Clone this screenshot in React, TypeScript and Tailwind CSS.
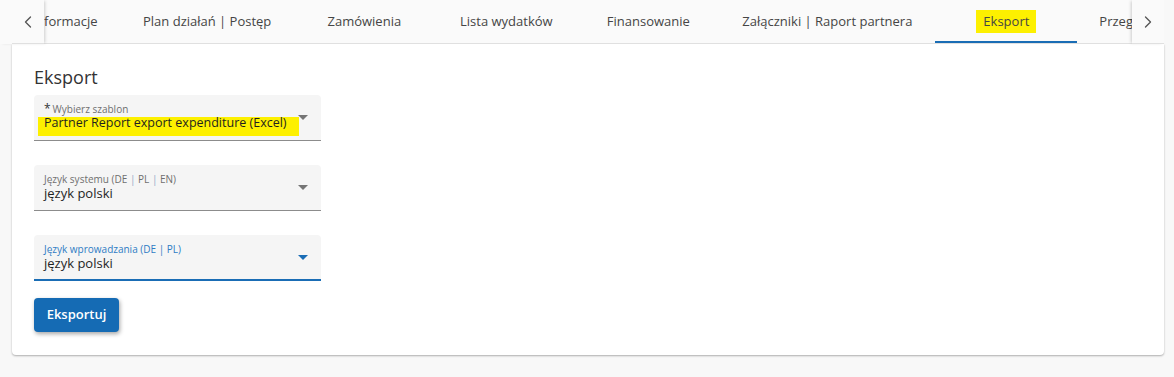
import { ChevronLeft, ChevronRight } from 'lucide-react';

const tabs = [
  'Informacje',
  'Plan działań | Postęp',
  'Zamówienia',
  'Lista wydatków',
  'Finansowanie',
  'Załączniki | Raport partnera',
  'Eksport',
  'Przegląd raportu',
];

const ACTIVE = 'Eksport';

function Caret({ blue }: { blue?: boolean }) {
  return (
    <svg width="10" height="5" viewBox="0 0 10 5" className="shrink-0">
      <path d="M0 0 L10 0 L5 5 Z" fill={blue ? '#1a6db5' : '#757575'} />
    </svg>
  );
}

interface SelectFieldProps {
  label: React.ReactNode;
  value: React.ReactNode;
  focused?: boolean;
  highlight?: boolean;
  valueSize?: string;
}

function SelectField({ label, value, focused, highlight, valueSize = 'text-[13px]' }: SelectFieldProps) {
  return (
    <div
      className={`relative w-[287px] h-[46px] bg-[#f5f5f5] rounded-t-[4px] ${
        focused ? 'border-b-2 border-[#1a6db5]' : 'border-b border-[#8c8c8c]'
      }`}
    >
      {/* marker highlight from the screenshot annotation */}
      {highlight && (
        <div className="absolute left-[4px] top-[22px] w-[261px] h-[19px] bg-[#fdf000]" />
      )}
      <div className="relative pl-[10px] pt-[8px]">
        <div
          className={`text-[10px] leading-[12px] whitespace-nowrap ${
            focused ? 'text-[#2f7cc4]' : 'text-[#6f6f6f]'
          }`}
        >
          {label}
        </div>
        <div className={`${valueSize} leading-[18px] mt-[-1px] text-[#1f1f1f] whitespace-nowrap`}>
          {value}
        </div>
      </div>
      <div className="absolute right-[13px] top-[20px]">
        <Caret blue={focused} />
      </div>
    </div>
  );
}

export default function App() {
  return (
    <div
      className="w-[1174px] h-[377px] bg-[#f8f8f8] overflow-hidden"
      style={{ fontFamily: '"Open Sans", "Noto Sans", sans-serif' }}
    >
      <div className="w-[1164px]">
        {/* tab bar */}
        <div className="flex h-[44px] bg-[#fafafa]">
          <div className="relative z-10 w-[44px] shrink-0 flex flex-col bg-[#fafafa] shadow-[2px_0_3px_-1px_rgba(0,0,0,0.18)]">
            <div className="h-[43px] flex items-center justify-center pl-[11px]">
              <ChevronLeft size={20} strokeWidth={1.6} className="text-[#555]" />
            </div>
            <div className="h-px ml-[12px] bg-[#e0e0e0]" />
          </div>
          <div className="flex-1 overflow-hidden border-b border-[#e0e0e0]">
            <div className="flex ml-[-35px] h-[43px]">
              {tabs.map((tab, i) => {
                const isActive = tab === ACTIVE;
                return (
                  <div
                    key={tab}
                    className={`relative shrink-0 flex items-center justify-center text-[13px] font-medium text-[#454545] whitespace-nowrap ${
                      i === 0 ? 'w-[112px]' : 'min-w-[142px]'
                    } ${i === 5 ? 'px-[23px]' : 'px-[22px]'}`}
                  >
                    {isActive ? (
                      <span className="bg-[#fdf000] px-[7px] py-[2px] leading-[19px]">{tab}</span>
                    ) : (
                      <span>{tab}</span>
                    )}
                    {isActive && (
                      <div className="absolute left-0 right-0 bottom-[-1px] h-[3px] bg-[#1a6db5]" />
                    )}
                  </div>
                );
              })}
            </div>
          </div>
          <div className="relative z-10 w-[32px] shrink-0 flex items-center justify-center bg-[#fafafa] border-b border-[#e0e0e0] shadow-[-2px_0_3px_-1px_rgba(0,0,0,0.18)]">
            <ChevronRight size={20} strokeWidth={1.6} className="text-[#555]" />
          </div>
        </div>

        {/* card */}
        <div className="ml-[12px] h-[311px] bg-white rounded-b-[4px] shadow-[0_1px_2px_rgba(0,0,0,0.3)] px-[22px] pt-[20px]">
          <h2 className="text-[18px] leading-[26px] text-[#333] mb-[5px]">Eksport</h2>
          <div className="flex flex-col gap-[24px]">
            <SelectField
              highlight
              valueSize="text-[12.5px]"
              label={
                <span>
                  <span className="text-[12px] leading-[10px] text-[#333] mr-[2px]">*</span>
                  Wybierz szablon
                </span>
              }
              value="Partner Report export expenditure (Excel)"
            />
            <SelectField
              label={
                <span>
                  Język systemu (DE <span className="text-[#8fa9c6]">|</span> PL{' '}
                  <span className="text-[#8fa9c6]">|</span> EN)
                </span>
              }
              value="język polski"
            />
            <SelectField label="Język wprowadzania (DE | PL)" value="język polski" focused />
          </div>
          <button className="mt-[17px] w-[85px] h-[34px] rounded-[4px] bg-[#156bb4] text-white text-[13px] font-semibold shadow-[1px_2px_4px_rgba(0,0,0,0.35)]">
            Eksportuj
          </button>
        </div>
      </div>
    </div>
  );
}
